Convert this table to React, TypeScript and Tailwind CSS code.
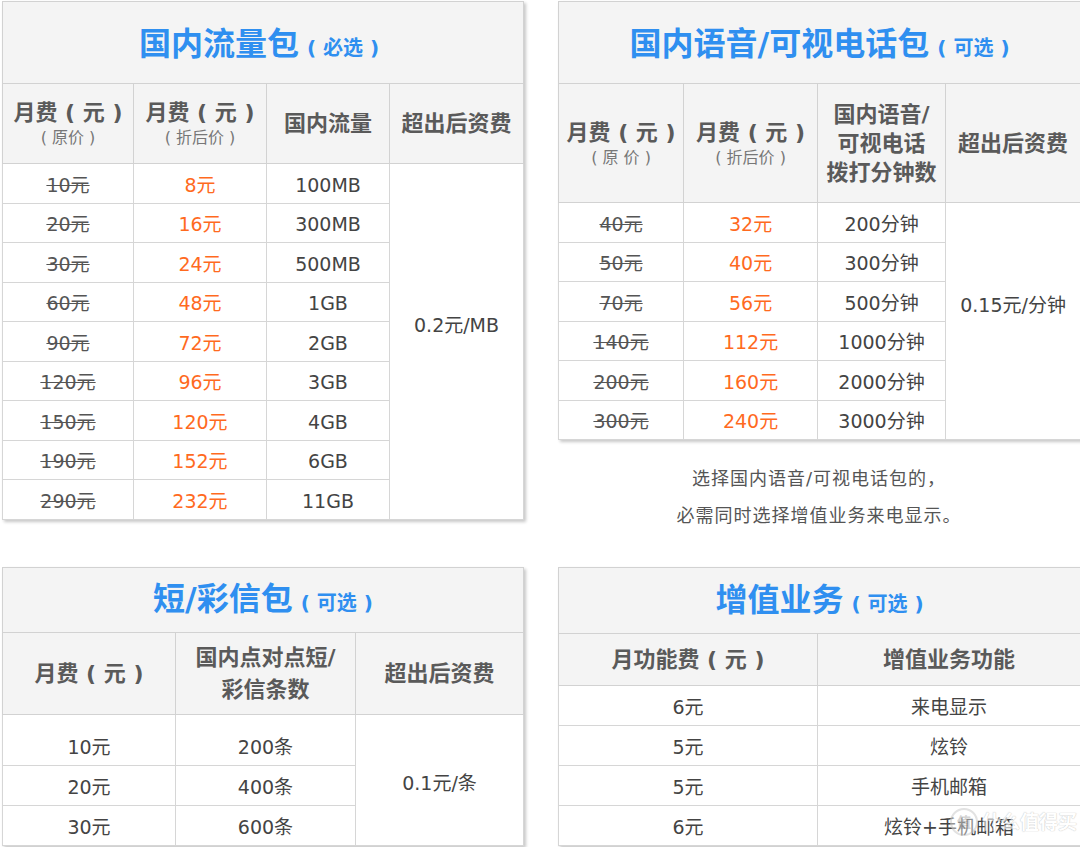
import React from "react";

const font = { fontFamily: '"DejaVu Sans", "Noto Sans CJK SC", sans-serif' };

const th = "border border-[#d2d2d2] bg-[#f4f4f4] text-center align-middle font-bold text-[#5a5a5a]";
const td = "border border-[#d6d6d6] bg-white text-center align-middle p-0 pt-[3px]";

function Title({ main, sub }: { main: string; sub: string }) {
  return (
    <span className="inline-flex items-baseline text-[#2f8ff0] font-bold">
      <span className="text-[32px] leading-none">{main}</span>
      <span className="text-[20px] leading-none ml-[8px] whitespace-pre">( {sub} )</span>
    </span>
  );
}

function PriceHead({ note }: { note: string }) {
  return (
    <div className="flex flex-col items-center">
      <span className="text-[22px] leading-[29px] whitespace-pre">月费 ( 元 )</span>
      <span className="text-[16px] leading-[22px] font-normal text-[#777] whitespace-pre">( {note} )</span>
    </div>
  );
}

const data = [
  ["10元", "8元", "100MB"],
  ["20元", "16元", "300MB"],
  ["30元", "24元", "500MB"],
  ["60元", "48元", "1GB"],
  ["90元", "72元", "2GB"],
  ["120元", "96元", "3GB"],
  ["150元", "120元", "4GB"],
  ["190元", "152元", "6GB"],
  ["290元", "232元", "11GB"],
];

const voice = [
  ["40元", "32元", "200分钟"],
  ["50元", "40元", "300分钟"],
  ["70元", "56元", "500分钟"],
  ["140元", "112元", "1000分钟"],
  ["200元", "160元", "2000分钟"],
  ["300元", "240元", "3000分钟"],
];

const sms = [
  ["10元", "200条"],
  ["20元", "400条"],
  ["30元", "600条"],
];

const extra = [
  ["6元", "来电显示"],
  ["5元", "炫铃"],
  ["5元", "手机邮箱"],
  ["6元", "炫铃+手机邮箱"],
];

function DataTable() {
  return (
    <table className="w-[521px] table-fixed border-collapse shadow-[2px_2px_3px_rgba(0,0,0,0.22)]">
      <colgroup>
        <col className="w-[131px]" />
        <col className="w-[133px]" />
        <col className="w-[123px]" />
        <col className="w-[134px]" />
      </colgroup>
      <tbody>
        <tr className="h-[82px]">
          <td colSpan={4} className={th + " pt-1 pr-[8px]"}>
            <Title main="国内流量包" sub="必选" />
          </td>
        </tr>
        <tr className="h-[80px]">
          <td className={th}><PriceHead note="原价" /></td>
          <td className={th}><PriceHead note="折后价" /></td>
          <td className={th + " text-[22px]"}>国内流量</td>
          <td className={th + " text-[22px]"}>超出后资费</td>
        </tr>
        {data.map((r, i) => (
          <tr key={r[0]} className={i % 2 === 0 ? "h-[40px]" : "h-[39px]"}>
            <td className={td + " text-[19px] text-[#555] line-through"}>{r[0]}</td>
            <td className={td + " text-[19px] text-[#ff6a1e]"}>{r[1]}</td>
            <td className={td + " text-[19px] text-[#444]"}>{r[2]}</td>
            {i === 0 && (
              <td rowSpan={9} className={td + " text-[19px] text-[#444] pb-[36px]"}>
                0.2元/MB
              </td>
            )}
          </tr>
        ))}
      </tbody>
    </table>
  );
}

function VoiceTable() {
  return (
    <table className="w-[522px] table-fixed border-collapse shadow-[2px_2px_3px_rgba(0,0,0,0.22)]">
      <colgroup>
        <col className="w-[125px]" />
        <col className="w-[134px]" />
        <col className="w-[128px]" />
        <col className="w-[135px]" />
      </colgroup>
      <tbody>
        <tr className="h-[82px]">
          <td colSpan={4} className={th + " pt-1"}>
            <Title main="国内语音/可视电话包" sub="可选" />
          </td>
        </tr>
        <tr className="h-[119px]">
          <td className={th}><PriceHead note="原 价" /></td>
          <td className={th}><PriceHead note="折后价" /></td>
          <td className={th + " text-[22px] leading-[29px]"}>
            国内语音/
            <br />
            可视电话
            <br />
            拨打分钟数
          </td>
          <td className={th + " text-[22px]"}>超出后资费</td>
        </tr>
        {voice.map((r, i) => (
          <tr key={r[0]} className={i % 2 === 0 ? "h-[40px]" : "h-[39px]"}>
            <td className={td + " text-[19px] text-[#555] line-through"}>{r[0]}</td>
            <td className={td + " text-[19px] text-[#ff6a1e]"}>{r[1]}</td>
            <td className={td + " text-[19px] text-[#444]"}>{r[2]}</td>
            {i === 0 && (
              <td rowSpan={6} className={td + " text-[19px] text-[#444] pb-[34px]"}>
                0.15元/分钟
              </td>
            )}
          </tr>
        ))}
      </tbody>
    </table>
  );
}

function SmsTable() {
  return (
    <table className="w-[521px] table-fixed border-collapse shadow-[2px_2px_3px_rgba(0,0,0,0.22)]">
      <colgroup>
        <col className="w-[173px]" />
        <col className="w-[180px]" />
        <col className="w-[168px]" />
      </colgroup>
      <tbody>
        <tr className="h-[65px]">
          <td colSpan={3} className={th}>
            <Title main="短/彩信包" sub="可选" />
          </td>
        </tr>
        <tr className="h-[82px]">
          <td className={th + " text-[22px] whitespace-pre"}>月费 ( 元 )</td>
          <td className={th + " text-[22px] leading-[32px]"}>
            国内点对点短/
            <br />
            彩信条数
          </td>
          <td className={th + " text-[22px]"}>超出后资费</td>
        </tr>
        {sms.map((r, i) => (
          <tr key={r[0]} className={i === 0 ? "h-[51px]" : "h-[40px]"}>
            <td className={td + " text-[19px] text-[#444]" + (i === 0 ? " pt-[14px]" : "")}>{r[0]}</td>
            <td className={td + " text-[19px] text-[#444]" + (i === 0 ? " pt-[14px]" : "")}>{r[1]}</td>
            {i === 0 && (
              <td rowSpan={3} className={td + " text-[19px] text-[#444] pt-[6px]"}>
                0.1元/条
              </td>
            )}
          </tr>
        ))}
      </tbody>
    </table>
  );
}

function ExtraTable() {
  return (
    <table className="w-[522px] table-fixed border-collapse shadow-[2px_2px_3px_rgba(0,0,0,0.22)]">
      <colgroup>
        <col className="w-[259px]" />
        <col className="w-[263px]" />
      </colgroup>
      <tbody>
        <tr className="h-[66px]">
          <td colSpan={2} className={th}>
            <Title main="增值业务" sub="可选" />
          </td>
        </tr>
        <tr className="h-[52px]">
          <td className={th + " text-[22px] whitespace-pre"}>月功能费 ( 元 )</td>
          <td className={th + " text-[22px]"}>增值业务功能</td>
        </tr>
        {extra.map((r, i) => (
          <tr key={i} className="h-[40px]">
            <td className={td + " text-[19px] text-[#444]"}>{r[0]}</td>
            <td className={td + " text-[19px] text-[#444]"}>{r[1]}</td>
          </tr>
        ))}
      </tbody>
    </table>
  );
}

export default function App() {
  return (
    <div className="relative w-[1080px] h-[847px] overflow-hidden bg-white" style={font}>
      <div className="flex h-[567px] pt-px pl-[2px] gap-[34px]">
        <div>
          <DataTable />
        </div>
        <div className="flex flex-col">
          <VoiceTable />
          <div className="mt-[20px] w-[522px] flex flex-col items-center text-[18px] leading-[37px] text-[#555] tracking-[1px]">
            <p>选择国内语音/可视电话包的，</p>
            <p>必需同时选择增值业务来电显示。</p>
          </div>
        </div>
      </div>
      <div className="flex pl-[2px] gap-[34px]">
        <SmsTable />
        <ExtraTable />
      </div>

      {/* watermark */}
      <div className="absolute left-[950px] top-[808px] flex items-center gap-[4px] opacity-60">
        <div className="w-[28px] h-[28px] rounded-full border-2 border-[#cfcfcf] bg-white/70 flex items-center justify-center text-[14px] text-[#b8b8b8] font-bold">
          值
        </div>
        <span className="text-[19px] text-white font-bold [text-shadow:0_0_1px_#aaa,0_0_1px_#aaa]">
          什么值得买
        </span>
      </div>
    </div>
  );
}
